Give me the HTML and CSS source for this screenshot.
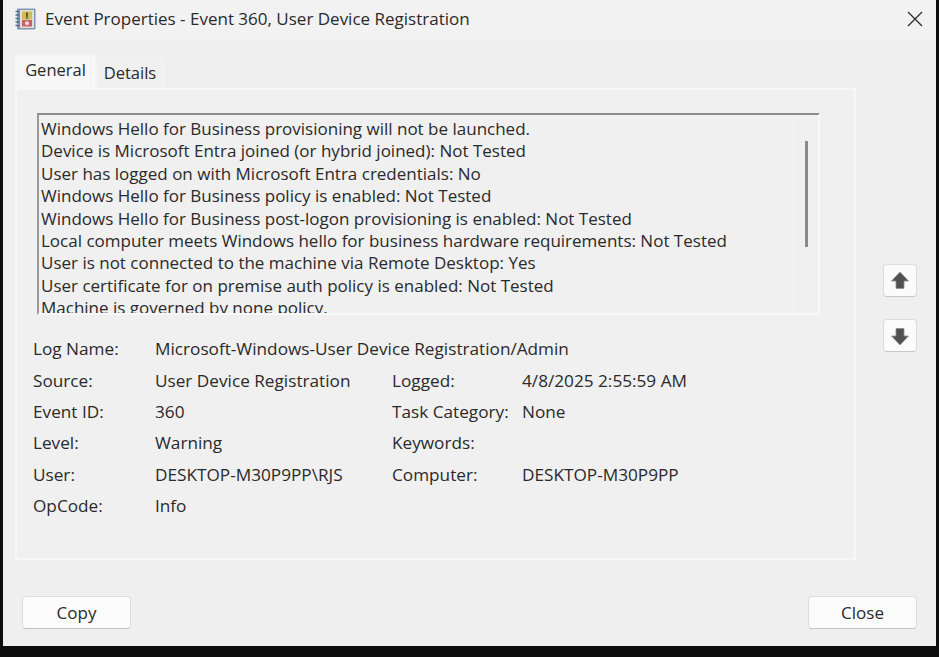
FILE: index.html
```html
<!DOCTYPE html>
<html lang="en">
<head>
<meta charset="utf-8">
<title>Event Properties</title>
<link rel="stylesheet" href="styles.css">
</head>
<body>
<div class="window">
  <header class="titlebar">
    <svg class="app-icon" viewBox="0 0 21 22" width="21" height="22" aria-hidden="true">
      <rect x="2" y="0.500" width="18.500" height="21" rx="1" fill="#7d97b8"/>
      <rect x="5" y="2" width="14" height="18" fill="#e4e0cc"/>
      <path d="M7 3.500h10v8H7z" fill="#cdbb5c"/>
      <path d="M12 4.500v4.500M12 9.800v1.200" stroke="#5a4a20" stroke-width="1.700"/>
      <rect x="7" y="12" width="10" height="6.500" fill="#c9606e"/>
      <circle cx="12" cy="15.200" r="2" fill="#efdcdc"/>
      <path d="M0.500 3.500h4M0.500 7h4M0.500 10.500h4M0.500 14h4M0.500 17.500h4" stroke="#4f7099" stroke-width="1.400"/>
    </svg>
    <span class="title">Event Properties - Event 360, User Device Registration</span>
    <svg class="close-x" viewBox="0 0 16 16" width="16" height="16" aria-hidden="true">
      <path d="M1 1l14 14M15 1L1 15" stroke="#2b2b2b" stroke-width="1.300" fill="none"/>
    </svg>
  </header>

  <main class="content">
    <section class="tabs-area">
      <nav class="tabs">
        <span class="tab tab-active">General</span>
        <span class="tab">Details</span>
      </nav>
      <div class="panel">
        <div class="textbox">
          <div class="scroll-track"></div>
          <div class="scroll-thumb"></div>
          <p class="log-line">Windows Hello for Business provisioning will not be launched.</p>
          <p class="log-line">Device is Microsoft Entra joined (or hybrid joined): Not Tested</p>
          <p class="log-line">User has logged on with Microsoft Entra credentials: No</p>
          <p class="log-line">Windows Hello for Business policy is enabled: Not Tested</p>
          <p class="log-line">Windows Hello for Business post-logon provisioning is enabled: Not Tested</p>
          <p class="log-line">Local computer meets Windows hello for business hardware requirements: Not Tested</p>
          <p class="log-line">User is not connected to the machine via Remote Desktop: Yes</p>
          <p class="log-line">User certificate for on premise auth policy is enabled: Not Tested</p>
          <p class="log-line">Machine is governed by none policy.</p>
        </div>
        <div class="fields">
          <span>Log Name:</span><span class="span3">Microsoft-Windows-User Device Registration/Admin</span>
          <span>Source:</span><span>User Device Registration</span><span>Logged:</span><span>4/8/2025 2:55:59 AM</span>
          <span>Event ID:</span><span>360</span><span>Task Category:</span><span>None</span>
          <span>Level:</span><span>Warning</span><span>Keywords:</span><span></span>
          <span>User:</span><span>DESKTOP-M30P9PP\RJS</span><span>Computer:</span><span>DESKTOP-M30P9PP</span>
          <span>OpCode:</span><span class="span3">Info</span>
        </div>
      </div>
    </section>
    <aside class="nav-buttons">
      <button class="arrow-btn" type="button" aria-label="Previous">
        <svg viewBox="0 0 20 20" width="20" height="20" aria-hidden="true"><path d="M10 1L18.500 10H14v7.500H6V10H1.500z" fill="#505050" stroke="#8f8f8f" stroke-width="0.800"/></svg>
      </button>
      <button class="arrow-btn" type="button" aria-label="Next">
        <svg viewBox="0 0 20 20" width="20" height="20" aria-hidden="true"><path d="M10 19L18.500 10H14V2.500H6V10H1.500z" fill="#505050" stroke="#8f8f8f" stroke-width="0.800"/></svg>
      </button>
    </aside>
  </main>

  <footer class="footer">
    <button class="btn" type="button">Copy</button>
    <button class="btn" type="button">Close</button>
  </footer>
</div>
</body>
</html>
```

FILE: styles.css
```css
* { box-sizing: border-box; }

html, body { margin: 0; height: 100%; }

body {
  background: #0d0d0d;
  overflow: hidden;
  font-family: "Open Sans", "Noto Sans", sans-serif;
  font-size: 17px;
  color: #2a2a2a;
}

.window {
  width: 933px;
  height: 646px;
  margin-left: 3px;
  background: #efefef;
  display: flex;
  flex-direction: column;
}

.titlebar {
  height: 40px;
  flex: none;
  display: flex;
  align-items: center;
  padding: 0 13px 3px 12px;
  background: #f2f2f2;
}

.app-icon { flex: none; margin-right: 9px; }

.title { flex: 1; font-size: 17px; }

.close-x { flex: none; }

.content {
  flex: 1;
  display: flex;
  padding: 15px 19px 0 12px;
}

.tabs-area { width: 841px; display: flex; flex-direction: column; }

.tabs { display: flex; height: 33px; align-items: flex-end; }

.tab {
  height: 31px;
  width: 68px;
  padding-top: 3px;
  text-align: center;
  font-size: 16.500px;
  border: 1px solid #f4f4f4;
  border-bottom: 0;
  background: #f0f0f0;
}

.tab-active {
  height: 33px;
  width: 81px;
  padding-top: 2px;
  background: #f7f7f7;
}

.panel {
  height: 472px;
  border: 2px solid #f7f7f7;
  padding: 23px 34px 0 20px;
  background: #f0f0f0;
}

.textbox {
  position: relative;
  height: 202px;
  overflow: hidden;
  padding: 3px 0 0 2px;
  border-top: 2px solid #8c8c8c;
  border-left: 2px solid #9a9a9a;
  border-right: 2px solid #f8f8f8;
  border-bottom: 2px solid #f8f8f8;
  background: #f0f0f0;
}

.scroll-track {
  position: absolute;
  top: 0;
  bottom: 0;
  right: 24px;
  width: 1px;
  background: #f4f4f4;
}

.scroll-thumb {
  position: absolute;
  top: 26px;
  right: 10px;
  width: 3px;
  height: 106px;
  background: #8a8a8a;
}

.log-line {
  margin: 0;
  height: 22.400px;
  line-height: 22.400px;
  white-space: nowrap;
}

.fields {
  display: grid;
  grid-template-columns: 122px 237px 130px 1fr;
  grid-auto-rows: 31.400px;
  align-items: center;
  margin: 18px 0 0 -4px;
  font-size: 17.200px;
  white-space: nowrap;
}

.span3 { grid-column: span 3; }

.nav-buttons {
  flex: 1;
  display: flex;
  flex-direction: column;
  align-items: flex-end;
  gap: 22px;
  padding-top: 209px;
}

.arrow-btn {
  width: 34px;
  height: 33px;
  padding: 0;
  display: flex;
  align-items: center;
  justify-content: center;
  background: #fbfbfb;
  border: 1px solid #dcdcdc;
  border-bottom-color: #c8c8c8;
  border-radius: 4px;
}

.footer {
  height: 50px;
  flex: none;
  display: flex;
  justify-content: space-between;
  align-items: flex-start;
  padding: 0 19px 0 19px;
}

.btn {
  width: 109px;
  height: 33px;
  font: inherit;
  color: #2a2a2a;
  background: #fbfbfb;
  border: 1px solid #dcdcdc;
  border-bottom-color: #c4c4c4;
  border-radius: 4px;
  padding: 0;
}
```
